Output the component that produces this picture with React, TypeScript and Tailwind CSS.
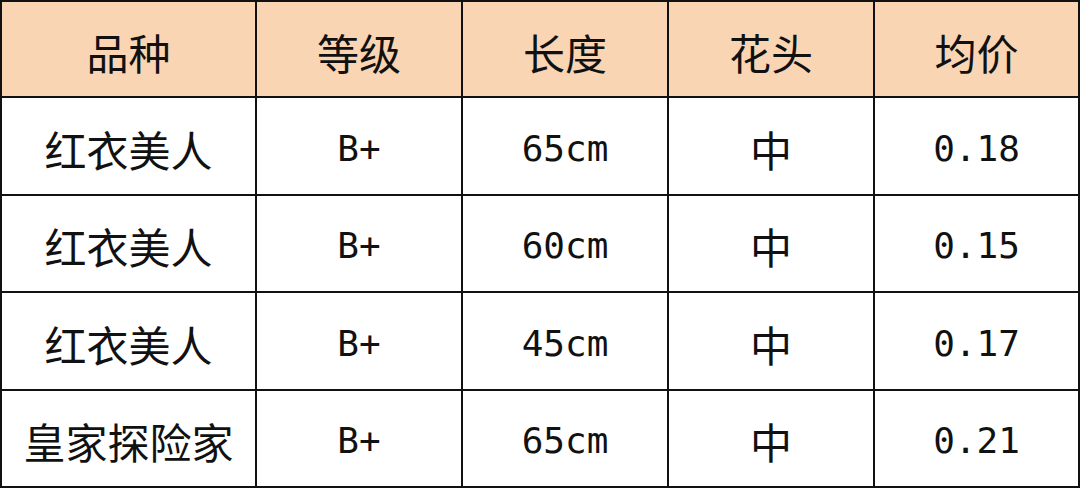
import React from 'react';

// Header labels and table rows
const headers = ['品种', '等级', '长度', '花头', '均价'];

const rows = [
    { name: '红衣美人', grade: 'B+', length: '65cm', head: '中', price: '0.18' },
    { name: '红衣美人', grade: 'B+', length: '60cm', head: '中', price: '0.15' },
    { name: '红衣美人', grade: 'B+', length: '45cm', head: '中', price: '0.17' },
    { name: '皇家探险家', grade: 'B+', length: '65cm', head: '中', price: '0.21' },
];

const cjk = "font-['Noto_Sans_CJK_SC',sans-serif] text-[42px]";
const mono = "font-['DejaVu_Sans_Mono','Noto_Sans_CJK_SC',monospace] text-[36px]";

const Cell = ({ children, head = false, font }: { children: React.ReactNode; head?: boolean; font: string }) => (
    <div className={`flex items-center justify-center pt-[5px] text-[#111] leading-none ${head ? 'bg-[#f9d5b4]' : 'bg-white'} ${font}`}>
        {children}
    </div>
);

const App = () => {
    return (
        <div className="w-[1080px] h-[488px] bg-white">
            <div className="w-full h-full bg-[#111] p-[2px] grid gap-[2px] grid-cols-[253px_204px_204px_204px_1fr] grid-rows-[94px_96px_95px_96px_1fr]">
                {headers.map((h) => (
                    <Cell key={h} head font={cjk}>{h}</Cell>
                ))}
                {rows.map((r, i) => (
                    <React.Fragment key={i}>
                        <Cell font={cjk}>{r.name}</Cell>
                        <Cell font={mono}>{r.grade}</Cell>
                        <Cell font={mono}>{r.length}</Cell>
                        <Cell font={cjk}>{r.head}</Cell>
                        <Cell font={mono}>{r.price}</Cell>
                    </React.Fragment>
                ))}
            </div>
        </div>
    );
};

export default App;
